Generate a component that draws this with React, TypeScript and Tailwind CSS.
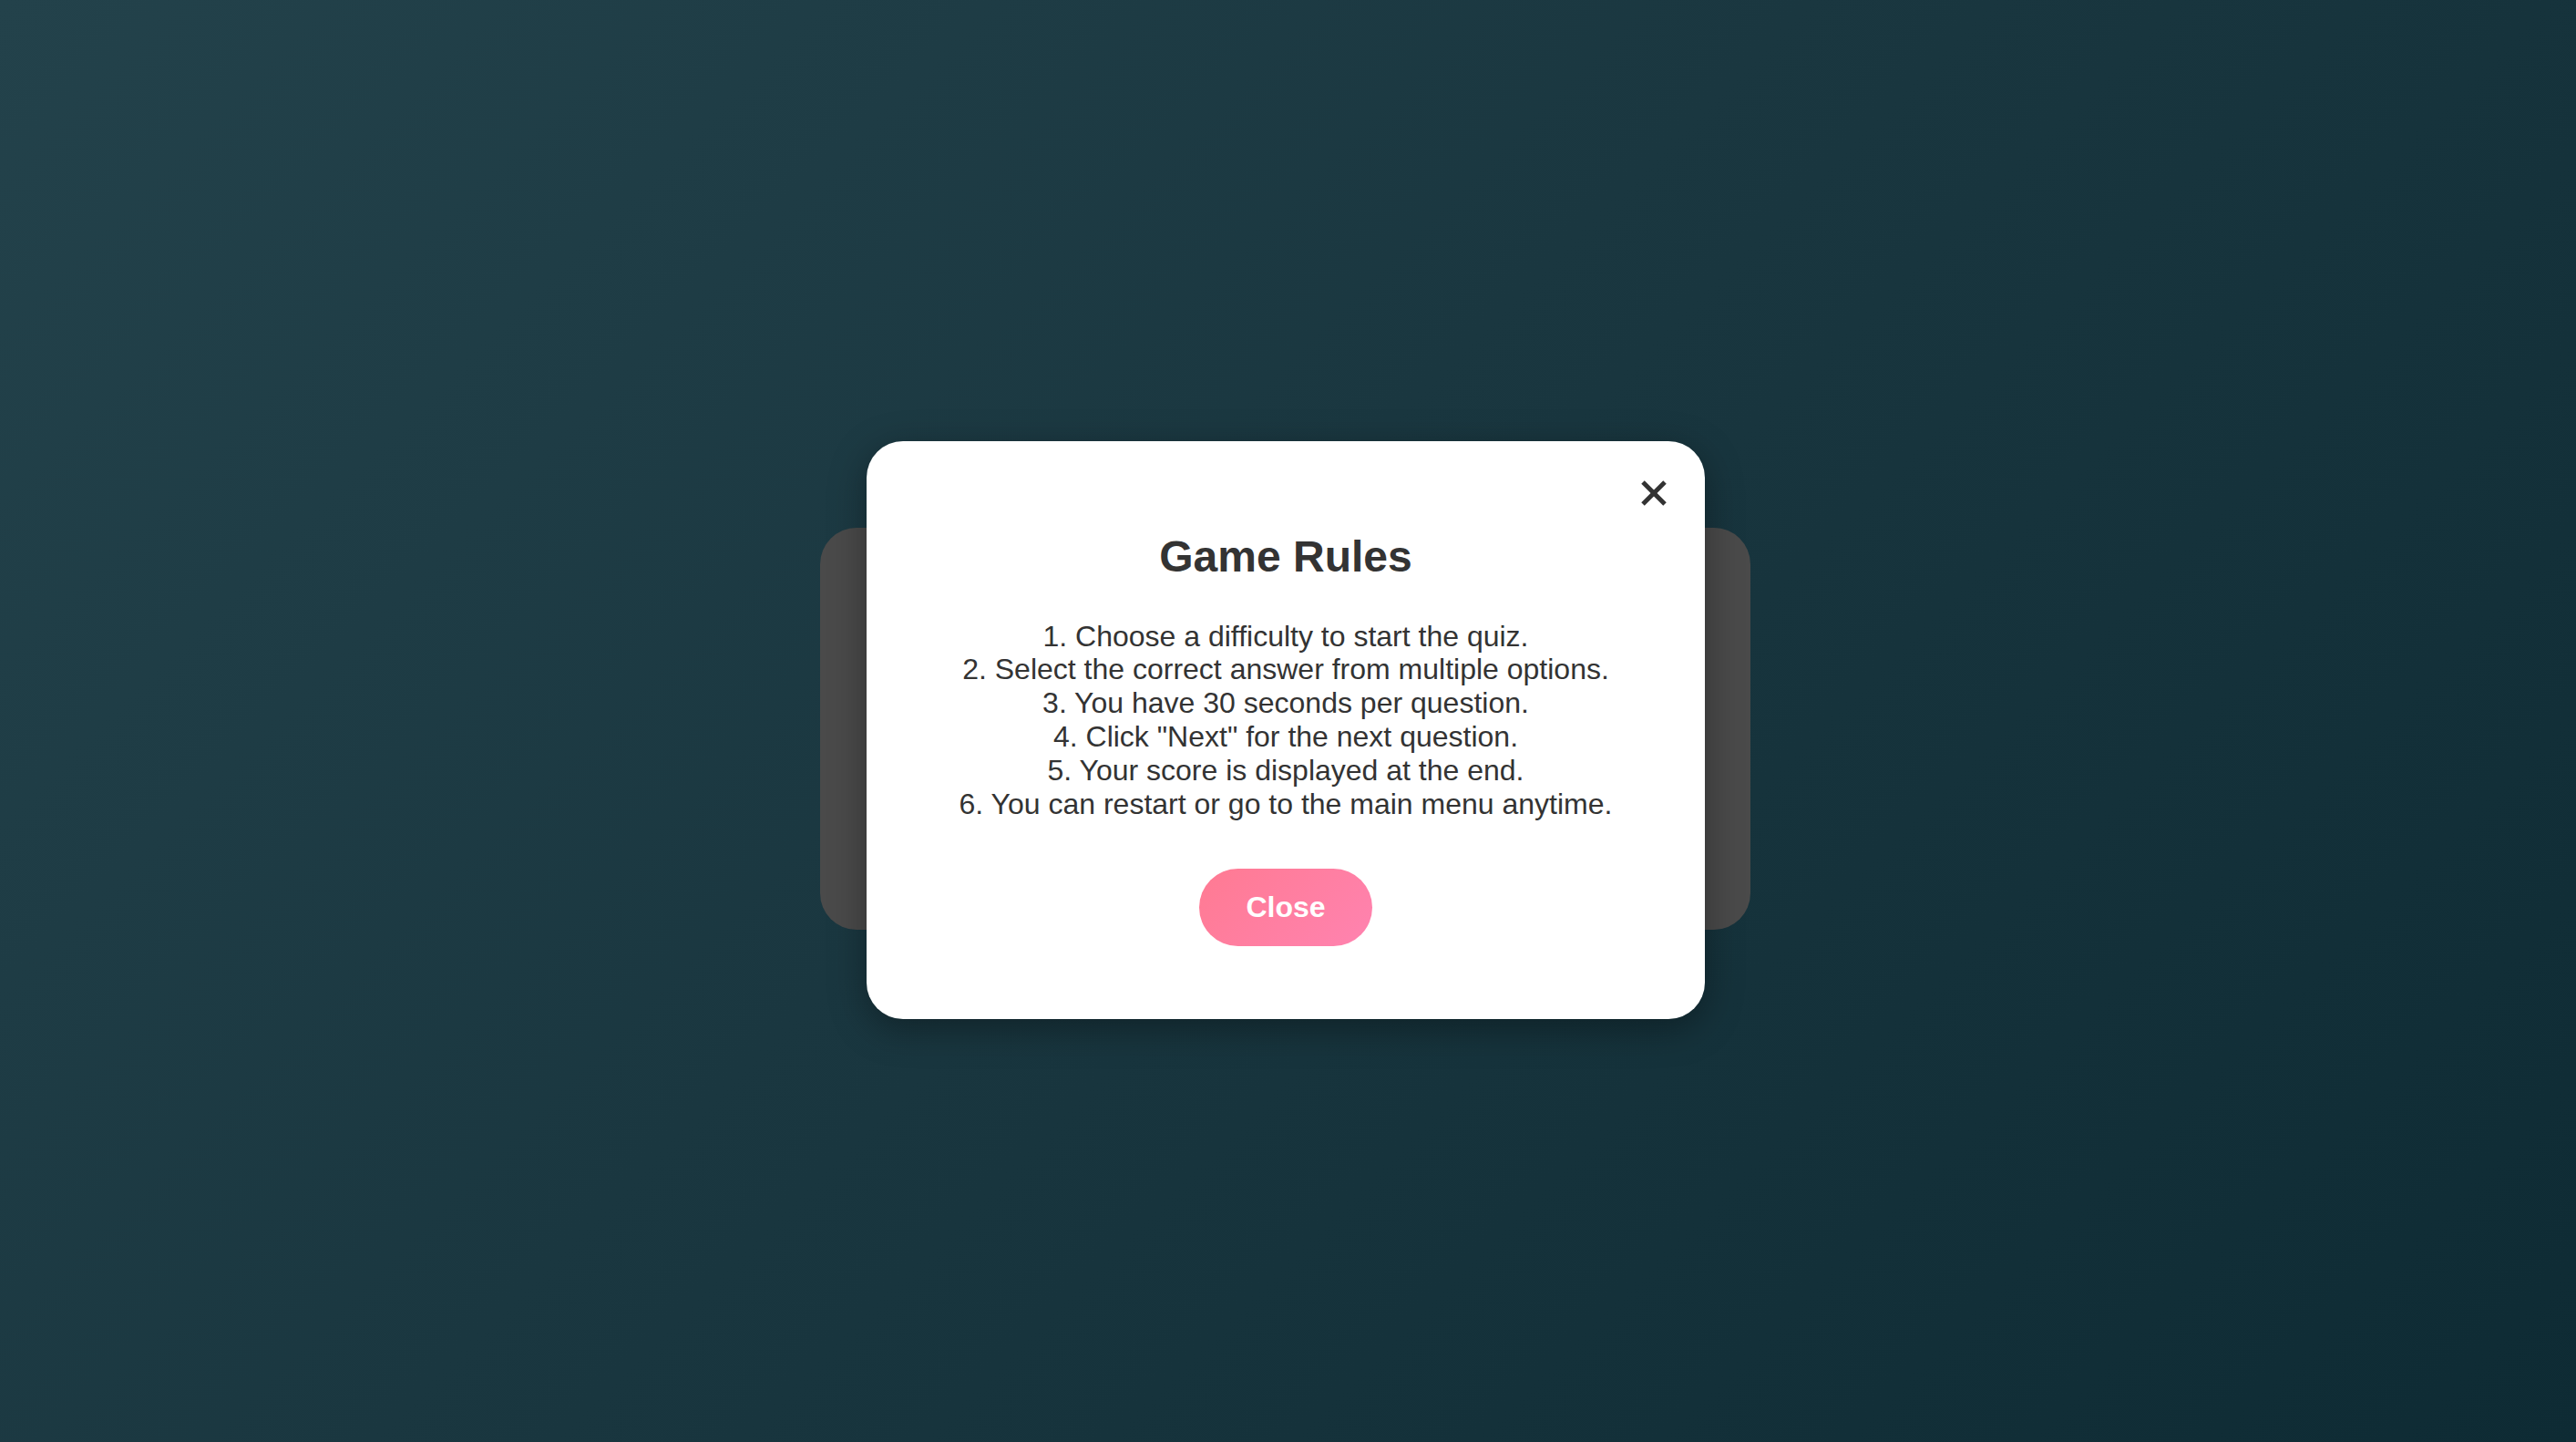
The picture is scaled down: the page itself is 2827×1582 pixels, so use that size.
import React from "react";

const rules = [
  "1. Choose a difficulty to start the quiz.",
  "2. Select the correct answer from multiple options.",
  "3. You have 30 seconds per question.",
  '4. Click "Next" for the next question.',
  "5. Your score is displayed at the end.",
  "6. You can restart or go to the main menu anytime.",
];

export default function App() {
  return (
    <div
      className="w-[2827px] h-[1582px] flex items-center justify-center pt-[17px] pr-[6px] bg-[linear-gradient(135deg,#23424b_0%,#1a3740_45%,#0e2b34_100%)] overflow-hidden"
      style={{ fontFamily: '"Liberation Sans", Arial, Helvetica, sans-serif' }}
    >
      <div className="relative w-[1021px] h-[441px] rounded-[40px] bg-[#4a4a4a]">
        <div className="absolute left-[51px] top-[-95px] w-[920px] h-[634px] rounded-[40px] bg-white shadow-[0_10px_40px_rgba(0,0,0,0.35)] flex flex-col items-center pt-[100px] text-[#333333]">
          <button className="absolute right-[42px] top-[43px] w-[28px] h-[28px] flex items-center justify-center">
            <svg width="28" height="28" viewBox="0 0 28 28">
              <line x1="2" y1="2" x2="26" y2="26" stroke="#333333" strokeWidth="5" />
              <line x1="26" y1="2" x2="2" y2="26" stroke="#333333" strokeWidth="5" />
            </svg>
          </button>
          <h2 className="text-[48px] leading-[53.6px] font-bold m-0">Game Rules</h2>
          <div className="mt-[42px] text-[32px] leading-[36.8px] text-center">
            {rules.map((r) => (
              <p key={r} className="m-0">
                {r}
              </p>
            ))}
          </div>
          <button className="mt-[53px] px-[51px] py-[24px] rounded-full bg-[linear-gradient(135deg,#ff7a92,#ff83b0)] text-white text-[32px] leading-[36.8px] font-bold">
            Close
          </button>
        </div>
      </div>
    </div>
  );
}
